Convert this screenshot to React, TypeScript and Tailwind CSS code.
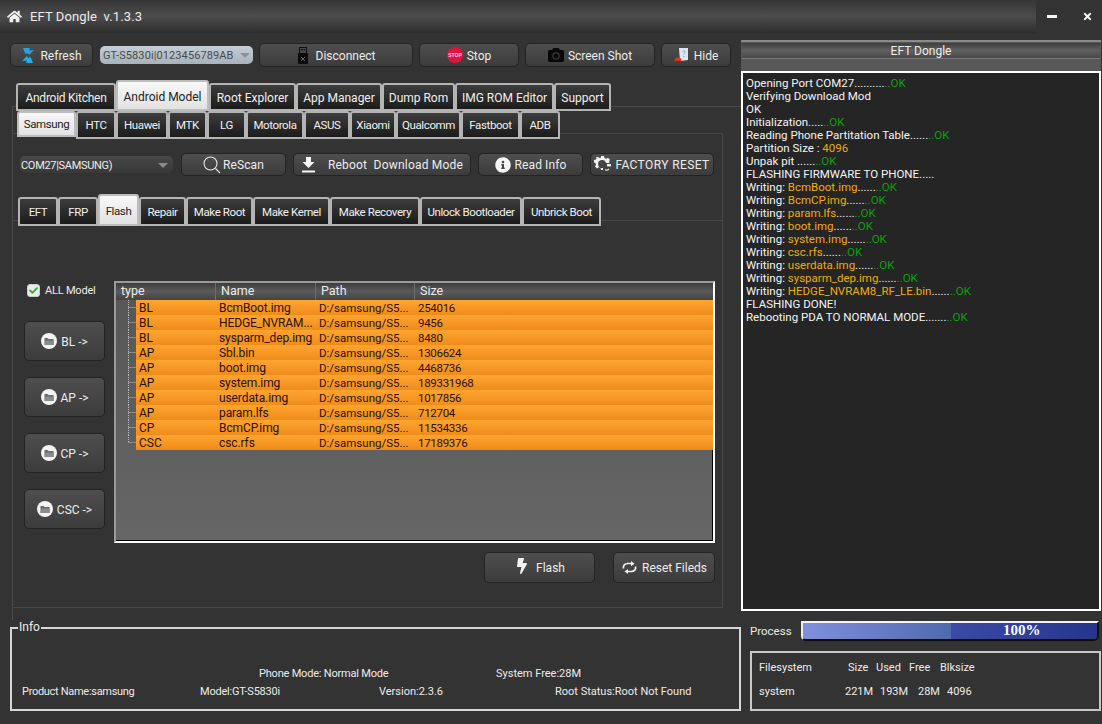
import React from "react";
import { FaHome, FaCamera, FaInfoCircle, FaBolt, FaTimes, FaCheck } from "react-icons/fa";

const tabBase = "relative z-10 flex items-center justify-center whitespace-nowrap border-2 rounded-t-[3px] ";
const tabOff = "border-[#b4b4b4] bg-gradient-to-b from-[#3d3d3d] to-[#1c1c1c] text-[#f0f0f0] ";
const tabOn = "border-[#bdbdbd] bg-gradient-to-b from-[#f8f8f8] to-[#e2e2e2] text-[#222] ";

function Tab({ label, w, on, h, onH, text, pad, onPad }: { label: string; w: number; on?: boolean; h: number; onH: number; text: string; pad: string; onPad: string }) {
  return (
    <div className={tabBase + text + " " + (on ? tabOn : tabOff)} style={{ width: w, height: on ? onH : h }}>
      <span className={on ? onPad : pad}>{label}</span>
    </div>
  );
}

const btn = "flex items-center justify-center whitespace-nowrap rounded-[5px] border border-[#232323] bg-gradient-to-b from-[#4e4e4e] to-[#3c3c3c] text-[12px] text-[#ececec] [&>span]:pt-[2px] ";

function FolderIcon() {
  return (
    <svg width="16" height="16" viewBox="0 0 16 16">
      <circle cx="8" cy="8" r="8" fill="#f4f4f4" />
      <path d="M3.500 5h3l1 1h5v6h-9z" fill="#6a6a6a" />
      <path d="M3.500 12l1.200-4.500h8.500L12.500 12z" fill="#8c8c8c" />
    </svg>
  );
}

function RefreshIcon() {
  return (
    <svg width="14" height="17" viewBox="0 0 14 17">
      <path d="M2 1h7l-1 2.500 5-.5-5 5-1.500-2.200L5 7.500C4 6 3 4 2 1z" fill="#2f9fe0" />
      <path d="M12 16H5l1-2.500-5 .5 5-5 1.500 2.200L9 9.500c1 1.500 2 3.500 3 6.500z" fill="#27a9ea" />
    </svg>
  );
}

function UsbIcon() {
  return (
    <svg width="12" height="17" viewBox="0 0 12 17">
      <rect x="2.500" y="0.500" width="7" height="6" fill="none" stroke="#111" />
      <rect x="4" y="2" width="1.400" height="1.400" fill="#111" />
      <rect x="6.600" y="2" width="1.400" height="1.400" fill="#111" />
      <rect x="1" y="6" width="10" height="11" rx="1" fill="#0c0c0c" />
      <path d="M4 10l4 4M8 10l-4 4" stroke="#666" strokeWidth="1" />
    </svg>
  );
}

function StopIcon() {
  return (
    <svg width="16" height="16" viewBox="0 0 16 16">
      <circle cx="8" cy="8" r="8" fill="#e3123e" />
      <text x="8" y="9.800" textAnchor="middle" fontSize="5" fontWeight="700" fill="#f6d8de" fontFamily="Liberation Sans, sans-serif">STOP</text>
    </svg>
  );
}

function HideIcon() {
  return (
    <svg width="15" height="17" viewBox="0 0 15 17">
      <path d="M5 1h9v12l-8 1z" fill="#dfe6f2" />
      <path d="M8.500 4.500c1-1.200 3-.6 2.400.8-.3.8-1.100.9-1.100 2" stroke="#8fa3c4" fill="none" />
      <rect x="9.200" y="9" width="1.200" height="1.200" fill="#8fa3c4" />
      <ellipse cx="4" cy="13" rx="3.500" ry="2.600" fill="#d23a22" />
      <ellipse cx="4" cy="15" rx="3" ry="1.500" fill="#7a2a1a" />
    </svg>
  );
}

function GearIcon() {
  return (
    <svg width="18" height="17" viewBox="0 0 18 17">
      <g fill="#f2f2f2">
        <path d="M7 0h3l.4 2 1.700.7L14 1.800l2 2-1 1.700.6 1.500H12a4 4 0 1 0-3 4.900V14l-2 0-.4-2-1.700-.7L3 12.400l-2-2 1-1.700L1.400 7 0 6.500V4l2-.4.7-1.600L1.800 1 4 1l1.500 1L7 1.500z" />
        <rect x="13" y="8" width="4" height="2.400" />
      </g>
      <path d="M11 13.500a2.800 2.800 0 0 0 4-.6" stroke="#ddd" strokeWidth="1.200" fill="none" />
    </svg>
  );
}

function DownloadIcon() {
  return (
    <svg width="15" height="17" viewBox="0 0 15 17">
      <path d="M5 1h5v5h3.500L7.500 12 1.500 6H5z" fill="#f6f6f6" />
      <rect x="1" y="14.500" width="13" height="2" fill="#f6f6f6" />
    </svg>
  );
}

function SearchIcon() {
  return (
    <svg width="18" height="18" viewBox="0 0 18 18" fill="none" stroke="#e8e8e8" strokeWidth="1.100">
      <circle cx="7.500" cy="7.500" r="6.500" />
      <path d="M12.500 12.500L17 17" />
    </svg>
  );
}

function RepeatIcon() {
  return (
    <svg width="17" height="13" viewBox="0 0 17 13" fill="none" stroke="#f0f0f0" strokeWidth="1.700">
      <path d="M2.500 7.500C1.800 4.500 4 2.500 6.500 2.500H10.500" />
      <path d="M14.500 5.500C15.200 8.500 13 10.500 10.500 10.500H6.500" />
      <path d="M10 0L13.500 2.700 10 5.200z" fill="#f0f0f0" stroke="none" />
      <path d="M7 8L3.500 10.300 7 13z" fill="#f0f0f0" stroke="none" />
    </svg>
  );
}

function Tree({ last }: { last?: boolean }) {
  return (
    <svg width="20" height="15" viewBox="0 0 20 15" className="shrink-0">
      <path d={last ? "M12.500 0V8M12.500 7.500H20" : "M12.500 0V15M12.500 7.500H20"} stroke="#bcbcbc" strokeDasharray="1 1" fill="none" />
    </svg>
  );
}

const row1 = [["Android Kitchen", 100], ["Android Model", 93, 1], ["Root Explorer", 87], ["App Manager", 86], ["Dump Rom", 73], ["IMG ROM Editor", 99], ["Support", 57]] as const;
const row2 = [["Samsung", 59, 1], ["HTC", 40], ["Huawei", 52], ["MTK", 39], ["LG", 39], ["Motorola", 58], ["ASUS", 46], ["Xiaomi", 46], ["Qualcomm", 65], ["Fastboot", 59], ["ADB", 40]] as const;
const row3 = [["EFT", 40], ["FRP", 40], ["Flash", 41, 1], ["Repair", 47], ["Make Root", 67], ["Make Kernel", 77], ["Make Recovery", 90], ["Unlock Bootloader", 102], ["Unbrick Boot", 79]] as const;

const files = [
  ["BL", "BcmBoot.img", "254016"],
  ["BL", "HEDGE_NVRAM...", "9456"],
  ["BL", "sysparm_dep.img", "8480"],
  ["AP", "Sbl.bin", "1306624"],
  ["AP", "boot.img", "4468736"],
  ["AP", "system.img", "189331968"],
  ["AP", "userdata.img", "1017856"],
  ["AP", "param.lfs", "712704"],
  ["CP", "BcmCP.img", "11534336"],
  ["CSC", "csc.rfs", "17189376"],
];

const G = ({ children }: { children: React.ReactNode }) => <span className="text-[#0ca00c]">{children}</span>;
const O = ({ children }: { children: React.ReactNode }) => <span className="text-[#f0ac00]">{children}</span>;

function W({ f, d = "......" }: { f: string; d?: string }) {
  return (
    <div>
      Writing: <O>{f}</O>{d}<G>..OK</G>
    </div>
  );
}

export default function App() {
  return (
    <div className="flex h-[724px] w-[1102px] flex-col overflow-hidden bg-[#333333] text-[12px] leading-[15px] text-[#ececec] [font-family:'Roboto',sans-serif]">
      {/* title bar */}
      <div className="flex h-[33px] shrink-0 items-stretch">
        <div className="flex flex-1 items-center bg-gradient-to-b from-[#363636] via-[#4c4c4c] to-[#2e2e2e] pl-[7px]">
          <FaHome className="text-[15px] text-[#f2f2f2]" />
          <span className="ml-[8px] text-[13px] tracking-[0.1px]">EFT Dongle&nbsp; v.1.3.3</span>
        </div>
        <div className="flex w-[66px] items-center bg-[#333333] pl-[11px] pb-[1px]">
          <div className="h-[3px] w-[10px] bg-[#f4f4f4]" />
          <FaTimes className="ml-[25px] text-[11px] text-[#f4f4f4]" />
        </div>
      </div>

      <div className="flex min-h-0 flex-1">
        {/* left column */}
        <div className="flex w-[741px] shrink-0 flex-col">
          <div className="ml-[10px] mt-[10px] flex h-[24px] items-center">
            <div className={btn + "h-[24px] w-[83px] gap-[5px]"}><RefreshIcon /><span>Refresh</span></div>
            <div className="ml-[7px] flex h-[18px] w-[153px] items-center overflow-hidden rounded-[5px] bg-gradient-to-b from-[#c5ced6] to-[#a8b2ba] pl-[3px] text-[11px] tracking-[0.1px] text-[#4a4a4a]">
              <span className="w-[132px] whitespace-nowrap">GT-S5830i|0123456789AB</span>
              <span className="ml-[5px] h-0 w-0 border-x-[5px] border-t-[5px] border-x-transparent border-t-[#8a929a]" />
            </div>
            <div className={btn + "ml-[6px] h-[24px] w-[154px] gap-[7px]"}><UsbIcon /><span>Disconnect</span></div>
            <div className={btn + "ml-[6px] h-[24px] w-[100px] gap-[4px]"}><StopIcon /><span>Stop</span></div>
            <div className={btn + "ml-[6px] h-[24px] w-[130px] gap-[4px]"}><FaCamera className="text-[16px] text-[#080808]" /><span>Screen Shot</span></div>
            <div className={btn + "ml-[6px] h-[24px] w-[70px] gap-[5px]"}><HideIcon /><span>Hide</span></div>
          </div>

          {/* tabs level 1 */}
          <div className="-mb-[5px] ml-[16px] mt-[13px] flex h-[31px] items-end">
            {row1.map((t) => <Tab key={t[0]} label={t[0]} w={t[1]} on={t.length > 2} h={28} onH={31} text={"text-[12px] " + (t[0] === "Android Kitchen" ? "tracking-[-0.25px]" : "")} pad="pt-[3px]" onPad="pt-[4px]" />)}
          </div>

          <div className="ml-[12px] flex h-[514px] flex-col border-l border-t border-[#4a4a4a]">
            <div className="ml-[4px] mt-[4px] flex h-[28px] items-start">
              {row2.map((t) => <Tab key={t[0]} label={t[0]} w={t[1]} on={t.length > 2} h={28} onH={26} text="text-[11.500px] tracking-[-0.4px]" pad="pt-[1px]" onPad="pt-[1px]" />)}
            </div>

            <div className="-mt-[6px] flex h-[475px] w-[710px] flex-col border-r border-t border-b border-[#484848]">
              {/* combo row */}
              <div className="ml-[7px] mt-[19px] flex h-[23px] items-center">
                <div className="flex h-[17px] w-[153px] items-center rounded-[5px] bg-gradient-to-b from-[#484848] to-[#383838] pl-[1px] pt-[1px] text-[11px] tracking-[-0.3px]">
                  <span className="w-[137px]">COM27|SAMSUNG)</span>
                  <span className="h-0 w-0 border-x-[5px] border-t-[5px] border-x-transparent border-t-[#8a8a8a]" />
                </div>
                <div className={btn + "ml-[8px] h-[23px] w-[105px] gap-[2px]"}><SearchIcon /><span className="tracking-[0.1px]">ReScan</span></div>
                <div className={btn + "ml-[7px] h-[23px] w-[178px] gap-[12px]"}><DownloadIcon /><span className="whitespace-pre tracking-[0.2px]">Reboot  Download Mode</span></div>
                <div className={btn + "ml-[7px] h-[23px] w-[105px] gap-[4px]"}><FaInfoCircle className="text-[16px] text-[#f6f6f6]" /><span className="tracking-[0.1px]">Read Info</span></div>
                <div className={btn + "ml-[7px] h-[23px] w-[124px] gap-[3px]"}><GearIcon /><span className="tracking-[0.4px]">FACTORY RESET</span></div>
              </div>

              {/* tabs level 3 */}
              <div className="ml-[5px] mt-[18px] flex h-[32px] items-end">
                {row3.map((t) => <Tab key={t[0]} label={t[0]} w={t[1]} on={t.length > 2} h={29} onH={32} text="text-[11.500px] tracking-[-0.4px]" pad="pt-[1px]" onPad="pt-[2px]" />)}
              </div>

              <div className="-mt-[6px] flex-1 border-t border-[#484848]">
                <div className="flex">
                  {/* left buttons */}
                  <div className="ml-[11px] mt-[61px] flex w-[81px] flex-col">
                    <div className="flex h-[16px] items-center gap-[5px] pl-[3px]">
                      <div className="flex h-[13px] w-[13px] items-center justify-center rounded-[3px] border border-[#c8d0c8] bg-[#e8eee8]">
                        <FaCheck className="text-[9px] text-[#32a832]" />
                      </div>
                      <span className="text-[11px] tracking-[-0.2px]">ALL Model</span>
                    </div>
                    {["BL ->", "AP ->", "CP ->", "CSC ->"].map((l, i) => (
                      <div key={l} className={btn + "h-[40px] w-[81px] gap-[4px] text-[12.500px] " + (i === 0 ? "mt-[23px]" : "mt-[16px]")}>
                        <FolderIcon />
                        <span>{l}</span>
                      </div>
                    ))}
                  </div>

                  {/* table */}
                  <div className="ml-[9px] mt-[60px] flex h-[262px] w-[601px] flex-col border-2 border-b-white border-r-white border-l-[#9a9a9a] border-t-[#9a9a9a] bg-gradient-to-b from-[#565656] to-[#666666]">
                    <div className="flex h-[17px] shrink-0 bg-gradient-to-b from-[#3d3d3d] via-[#5a5a5a] to-[#434343] text-[12.500px]">
                      <div className="w-[100px] border-r border-[#6e6e6e] pl-[5px]">type</div>
                      <div className="w-[100px] border-r border-[#6e6e6e] pl-[5px]">Name</div>
                      <div className="w-[99px] border-r border-[#6e6e6e] pl-[5px]">Path</div>
                      <div className="flex-1 pl-[5px]">Size</div>
                    </div>
                    {files.map((f, i) => (
                      <div key={i} className="flex h-[15px] shrink-0">
                        <Tree last={i === files.length - 1} />
                        <div className="flex h-[15px] w-[579px] items-center whitespace-nowrap bg-gradient-to-b from-[#ffa52f] to-[#ef8c1b] pt-[2px] text-[12px] text-[#2a1200]">
                          <span className="w-[83px] pl-[3px]">{f[0]}</span>
                          <span className="w-[100px] tracking-[-0.1px]">{f[1]}</span>
                          <span className="w-[99px] text-[11.500px]">D:/samsung/S5...</span>
                          <span className="text-[11.500px] tracking-[-0.3px]">{f[2]}</span>
                        </div>
                      </div>
                    ))}
                    <div className="flex-1 border-b border-r border-black" />
                  </div>
                </div>
                <div className="ml-[471px] mt-[9px] flex h-[31px] items-center">
                  <div className={btn + "h-[31px] w-[111px] gap-[6px]"}><FaBolt className="-mt-[3px] text-[16px] text-[#f2f2f2]" /><span>Flash</span></div>
                  <div className={btn + "ml-[18px] h-[31px] w-[102px] gap-[4px]"}><RepeatIcon /><span>Reset Fileds</span></div>
                </div>
              </div>
            </div>
          </div>

          {/* Info */}
          <div className="relative ml-[10px] mt-[7px] flex h-[84px] w-[731px] flex-col border-2 border-[#d6d6d6] text-[11px]">
            <span className="absolute -top-[9px] left-[6px] bg-[#333333] px-[1px] text-[12px] leading-[15px]">Info</span>
            <div className="mt-[37px] flex h-[15px]">
              <span className="ml-[247px] w-[237px] tracking-[-0.2px]">Phone Mode: Normal Mode</span>
              <span>System Free:28M</span>
            </div>
            <div className="mt-[3px] flex h-[15px]">
              <span className="ml-[10px] w-[178px] tracking-[-0.3px]">Product Name:samsung</span>
              <span className="w-[179px] tracking-[-0.2px]">Model:GT-S5830i</span>
              <span className="w-[176px]">Version:2.3.6</span>
              <span>Root Status:Root Not Found</span>
            </div>
          </div>
        </div>

        {/* right column */}
        <div className="flex min-w-0 flex-1 flex-col">
          <div className="mr-[1px] mt-[7px] flex h-[31px] shrink-0 flex-col border-t-2 border-[#8a8a8a] bg-[#585858] px-[1px]">
            <div className="mt-[1px] flex h-[16px] items-center justify-center border-b border-[#7a7a7a] bg-gradient-to-b from-[#3e3e3e] via-[#606060] to-[#484848] pt-[1px] text-[12px]">EFT Dongle</div>
          </div>
          <div className="mr-[1px] flex h-[540px] shrink-0 flex-col border-2 border-white bg-[#252525] px-[3px] pt-[4px] text-[11.500px] leading-[13px] text-[#f4f4f4]">
            <div>Opening Port COM27..........<G>..OK</G></div>
            <div>Verifying Download Mod</div>
            <div>OK</div>
            <div>Initialization.....<G>..OK</G></div>
            <div>Reading Phone Partitation Table......<G>..OK</G></div>
            <div>Partition Size : <O>4096</O></div>
            <div>Unpak pit ......<G>..OK</G></div>
            <div>FLASHING FIRMWARE TO PHONE.....</div>
            <W f="BcmBoot.img" />
            <W f="BcmCP.img" />
            <W f="param.lfs" />
            <W f="boot.img" />
            <W f="system.img" />
            <W f="csc.rfs" />
            <W f="userdata.img" />
            <W f="sysparm_dep.img" />
            <W f="HEDGE_NVRAM8_RF_LE.bin" />
            <div>FLASHING DONE!</div>
            <div>Rebooting PDA TO NORMAL MODE.......<G>..OK</G></div>
          </div>

          <div className="ml-[9px] mt-[10px] flex h-[20px] items-center">
            <span className="w-[51px] text-[11.500px]">Process</span>
            <div className="flex h-[20px] w-[298px] overflow-hidden rounded-b-[5px] border-2 border-b-[#0d0d0d] border-l-[#eeeeee] border-r-[#0d140d] border-t-[#f4f4f4]">
              <div className="w-[148px] bg-gradient-to-r from-[#8090de] to-[#4f6aae]" />
              <div className="flex-1 bg-gradient-to-r from-[#3a4ba6] to-[#27358c] pl-[52px] text-[15px] font-bold leading-[14px] text-white [font-family:'Liberation_Serif',serif]">100%</div>
            </div>
          </div>

          <div className="ml-[9px] mt-[10px] flex h-[60px] w-[351px] flex-col border-2 border-[#c8c8c8] pl-[7px] text-[11px]">
            <div className="mt-[7px] flex h-[15px]">
              <span className="w-[89px]">Filesystem</span>
              <span className="w-[28px]">Size</span>
              <span className="w-[33px]">Used</span>
              <span className="w-[31px]">Free</span>
              <span>Blksize</span>
            </div>
            <div className="mt-[9px] flex h-[15px]">
              <span className="w-[86px]">system</span>
              <span className="w-[35px]">221M</span>
              <span className="w-[38px]">193M</span>
              <span className="w-[29px]">28M</span>
              <span>4096</span>
            </div>
          </div>
        </div>
      </div>
    </div>
  );
}
